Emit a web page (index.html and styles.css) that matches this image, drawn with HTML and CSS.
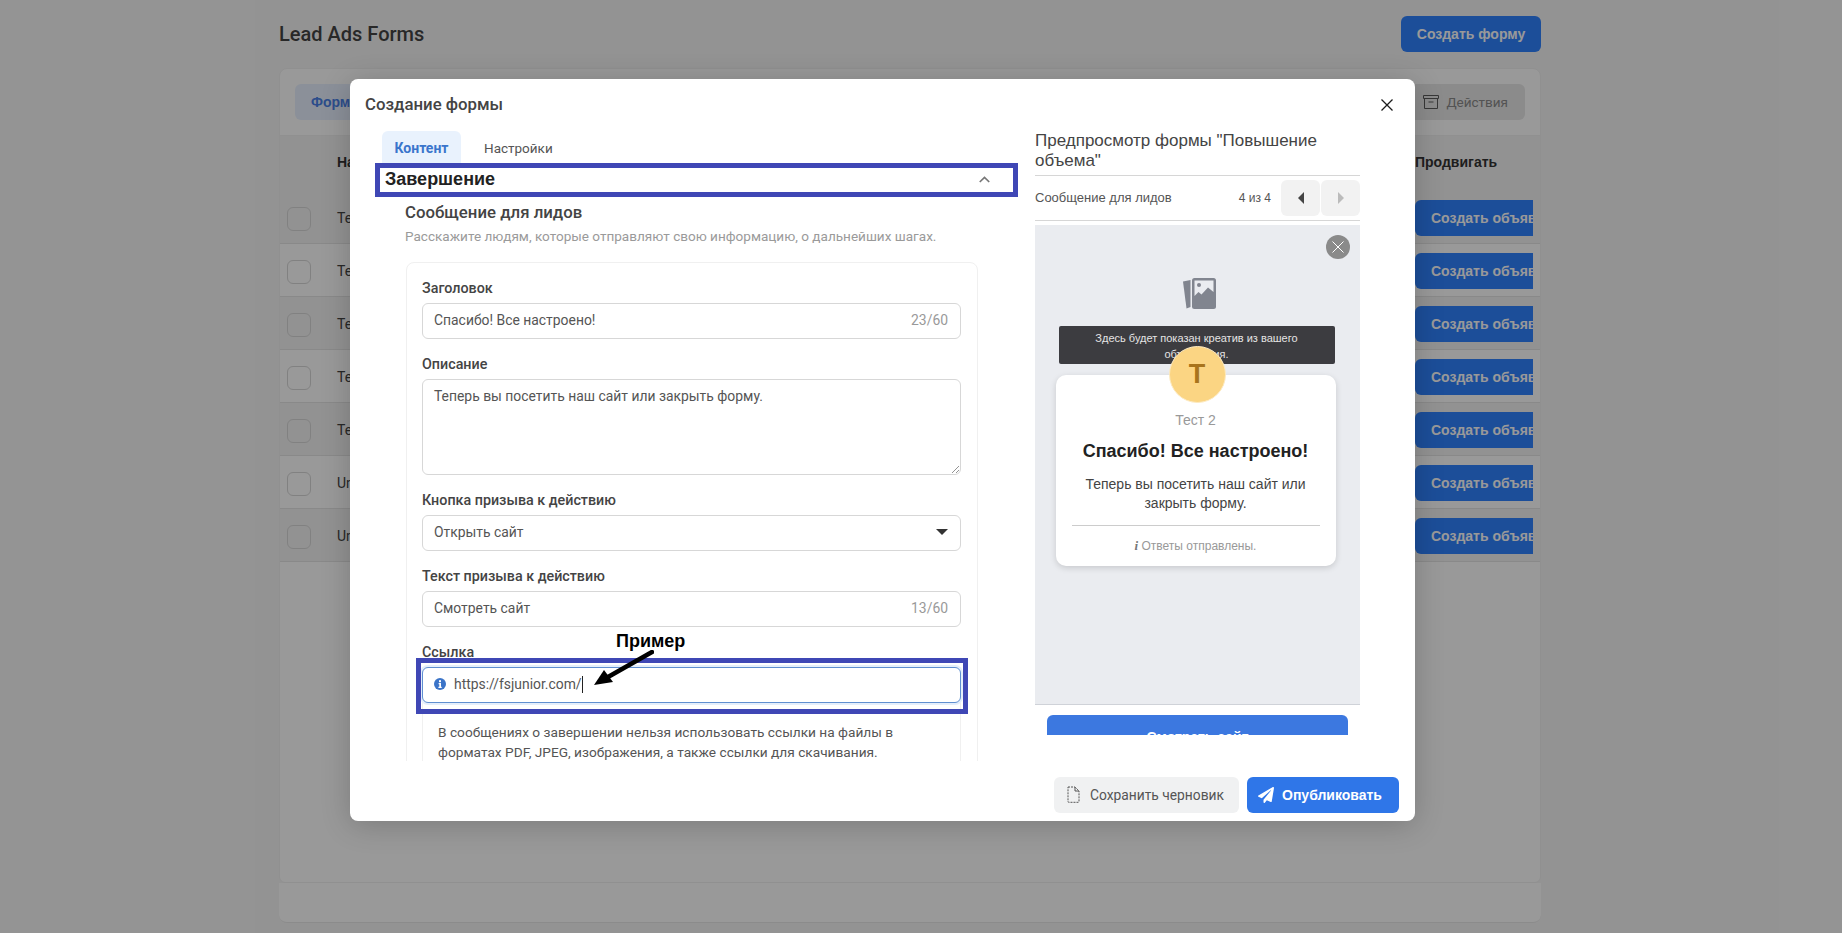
FILE: index.html
```html
<!DOCTYPE html>
<html lang="ru">
<head>
<meta charset="utf-8">
<title>Lead Ads Forms</title>
<link rel="stylesheet" href="styles.css">
</head>
<body>
<div class="page">
  <div class="page-head">
    <h1 class="page-title">Lead Ads Forms</h1>
    <button class="btn-primary">Создать форму</button>
  </div>
  <div class="panel">
    <div class="toolbar">
      <div class="tool-tab">Формы</div>
      <div class="tool-action">
        <svg class="archive-icon" viewBox="0 0 16 16" fill="none" stroke="#5c5c5c" stroke-width="1"><path d="M.5 1.500h15v3H.5zM1.500 4.500v10h13v-10M5.500 8h5"/></svg>
        Действия
      </div>
    </div>
    <div class="row row-head">
      <div class="cell-name">Название</div>
      <div class="cell-promote">Продвигать</div>
    </div>
    <div class="row row-dark"><span class="check"></span><div class="cell-name">Тест 2</div><div class="cell-promote"><span class="btn-create">Создать объявление</span></div></div>
    <div class="row"><span class="check"></span><div class="cell-name">Тест 1</div><div class="cell-promote"><span class="btn-create">Создать объявление</span></div></div>
    <div class="row row-dark"><span class="check"></span><div class="cell-name">Тест 3</div><div class="cell-promote"><span class="btn-create">Создать объявление</span></div></div>
    <div class="row"><span class="check"></span><div class="cell-name">Тест 4</div><div class="cell-promote"><span class="btn-create">Создать объявление</span></div></div>
    <div class="row row-dark"><span class="check"></span><div class="cell-name">Тест 5</div><div class="cell-promote"><span class="btn-create">Создать объявление</span></div></div>
    <div class="row"><span class="check"></span><div class="cell-name">Untitled</div><div class="cell-promote"><span class="btn-create">Создать объявление</span></div></div>
    <div class="row row-dark"><span class="check"></span><div class="cell-name">Untitled</div><div class="cell-promote"><span class="btn-create">Создать объявление</span></div></div>
  </div>
  <div class="panel-foot"></div>
</div>

<div class="backdrop"></div>

<div class="modal">
  <div class="modal-head">
    <span class="modal-title">Создание формы</span>
    <svg class="modal-close" viewBox="0 0 12 12" fill="none" stroke="#1c1c1c" stroke-width="1.300"><path d="M.5.5l11 11M11.500.5l-11 11"/></svg>
  </div>
  <div class="modal-body">
    <div class="editor">
      <div class="tabs">
        <div class="tab tab-active">Контент</div>
        <div class="tab">Настройки</div>
      </div>
      <div class="accordion-head">
        <span>Завершение</span>
        <svg class="chevron" viewBox="0 0 10 6" fill="none" stroke="#777" stroke-width="1.500"><path d="M.7 5.300L5 1l4.300 4.300"/></svg>
      </div>
      <div class="section">
        <div class="section-title">Сообщение для лидов</div>
        <div class="section-desc">Расскажите людям, которые отправляют свою информацию, о дальнейших шагах.</div>
        <div class="form-card">
          <div class="field">
            <label class="label">Заголовок</label>
            <div class="input"><span>Спасибо! Все настроено!</span><span class="count">23/60</span></div>
          </div>
          <div class="field">
            <label class="label">Описание</label>
            <div class="input textarea">Теперь вы посетить наш сайт или закрыть форму.
              <svg class="grip" viewBox="0 0 8 8" stroke="#777" stroke-width="0.800"><path d="M1 8l7-7M5 8l3-3"/></svg>
            </div>
          </div>
          <div class="field">
            <label class="label">Кнопка призыва к действию</label>
            <div class="input"><span>Открыть сайт</span><span class="caret"></span></div>
          </div>
          <div class="field">
            <label class="label">Текст призыва к действию</label>
            <div class="input"><span>Смотреть сайт</span><span class="count">13/60</span></div>
          </div>
          <div class="field">
            <label class="label">Ссылка</label>
            <div class="input input-focus">
              <svg class="info-icon" viewBox="0 0 12 12"><circle cx="6" cy="6" r="6" fill="#3b74c8"/><rect x="5" y="2.200" width="2" height="2" fill="#fff"/><path d="M4.600 5h2.400v3.800h.7V10H4.400V8.800h.9V6.200h-.7z" fill="#fff"/></svg>
              <span>https://fsjunior.com/</span><span class="cursor"></span>
              <div class="note-frame"></div>
              <div class="note-text">Пример</div>
              <svg class="note-arrow" viewBox="0 0 60 36"><path d="M58 2L14 27" stroke="#000" stroke-width="4.500" stroke-linecap="round"/><path d="M0 35l10-15 9 12z" fill="#000"/></svg>
            </div>
            <div class="warning">В сообщениях о завершении нельзя использовать ссылки на файлы в форматах PDF, JPEG, изображения, а также ссылки для скачивания.</div>
          </div>
        </div>
      </div>
    </div>
    <div class="preview">
      <div class="preview-title">Предпросмотр формы "Повышение объема"</div>
      <div class="preview-bar">
        <span class="step-name">Сообщение для лидов</span>
        <span class="step-count">4 из 4</span>
        <span class="step-btn"><i class="tri-left"></i></span>
        <span class="step-btn"><i class="tri-right"></i></span>
      </div>
      <div class="phone">
        <span class="phone-close"><svg viewBox="0 0 12 12" fill="none" stroke="#fff" stroke-width="1"><path d="M.5.5l11 11M11.500.5l-11 11"/></svg></span>
        <svg class="creative-icon" viewBox="0 0 33 31">
          <path d="M0 3.500L7.500 2v27l-4 1.500z" fill="#81858f"/>
          <rect x="9" y="0" width="24" height="31" rx="2.500" fill="#81858f"/>
          <path d="M11.500 2.500h19v11.500l-5.500-4.500-6.500 7-3-2.500-4 4z" fill="#eaecf0"/>
          <circle cx="16" cy="7" r="2" fill="#81858f"/>
        </svg>
        <div class="creative-note">Здесь будет показан креатив из вашего объявления.</div>
        <div class="thanks-card">
          <div class="avatar">T</div>
          <div class="thanks-org">Тест 2</div>
          <div class="thanks-title">Спасибо! Все настроено!</div>
          <div class="thanks-text">Теперь вы посетить наш сайт или закрыть форму.</div>
          <div class="thanks-foot"><i>i</i> Ответы отправлены.</div>
        </div>
      </div>
      <div class="phone-action"><span class="phone-btn">Смотреть сайт</span></div>
    </div>
  </div>
  <div class="modal-foot">
    <button class="btn-draft">
      <svg class="doc-icon" viewBox="0 0 13 17" fill="none" stroke="#555" stroke-width="1" stroke-dasharray="2 1"><path d="M1 1h7l4 4v10.500a.8.8 0 0 1-.8.8H1.800a.8.8 0 0 1-.8-.8z"/><path d="M8 1v4h4" stroke-dasharray="none"/></svg>
      Сохранить черновик
    </button>
    <button class="btn-publish">
      <svg class="plane-icon" viewBox="0 0 512 512"><path fill="#fff" d="M476 3.200L12.500 270.600c-18.100 10.400-15.800 35.600 2.200 43.200L121 358.400l287.300-253.200c5.500-4.900 13.300 2.600 8.600 8.300L176 407v80.500c0 23.600 28.500 32.900 42.500 15.800L282 426l124.600 52.200c14.200 6 30.400-2.900 33-18.200l72-432C515 7.800 493.300-6.800 476 3.200z"/></svg>
      Опубликовать
    </button>
  </div>
</div>
</body>
</html>
```
FILE: styles.css
```css
/* reset */
* {
  margin: 0;
  padding: 0;
  box-sizing: border-box;
}
html, body {
  height: 933px;
  overflow: hidden;
}
body {
  position: relative;
  background: #f6f6f6;
  font-family: Roboto, "Liberation Sans", sans-serif;
  color: #444;
  font-size: 14px;
}
button {
  border: 0;
  font-family: inherit;
}

/* page behind the dialog */
.page {
  width: 1262px;
  margin-left: 279px;
  padding-top: 16px;
}
.page-head {
  display: flex;
  justify-content: space-between;
  align-items: center;
  margin-bottom: 16px;
}
.page-title {
  font-size: 20px;
  font-weight: 500;
  color: #444;
}
.btn-primary {
  width: 140px;
  height: 36px;
  border-radius: 6px;
  background: #2f82ff;
  color: #fff;
  font: bold 14px "Liberation Sans", sans-serif;
}
.panel {
  height: 815px;
  background: #fff;
  border-radius: 8px 8px 6px 6px;
  overflow: hidden;
  border: 1px solid #f0f0f0;
}
.panel-foot {
  height: 40px;
  background: #fff;
  border-radius: 0 0 8px 8px;
  border-bottom: 1px solid #e8e8e8;
}
.toolbar {
  height: 67px;
  padding: 15px 15px 0 15px;
  display: flex;
  justify-content: space-between;
  align-items: flex-start;
  border-bottom: 1px solid #f0f0f0;
}
.tool-tab {
  height: 36px;
  padding: 0 16px;
  background: #e8f1ff;
  color: #4a80e8;
  font: bold 14px/36px "Liberation Sans", sans-serif;
  border-radius: 6px;
}
.tool-action {
  height: 36px;
  padding: 0 17px 0 16px;
  display: flex;
  align-items: center;
  gap: 7px;
  background: #e8e8e8;
  color: #8a8a8a;
  font-size: 13.500px;
  border-radius: 6px;
}
.archive-icon {
  width: 16px;
  height: 16px;
}
.row {
  position: relative;
  height: 53px;
  padding: 2px 0 0 57px;
  display: flex;
  align-items: center;
  border-bottom: 1px solid #e4e4e4;
}
.row-head {
  height: 55px;
  padding: 0 0 3px 57px;
  background: #f4f4f4;
  border-bottom: 0;
  font: bold 14px "Liberation Sans", sans-serif;
  color: #333;
}
.row-dark {
  background: #f3f3f3;
}
.check {
  position: absolute;
  left: 7px;
  top: 16px;
  width: 24px;
  height: 24px;
  border: 1px solid #d8d8d8;
  border-radius: 6px;
}
.cell-name {
  flex: 1;
}
.cell-promote {
  width: 118px;
  margin-right: 7px;
  overflow: hidden;
  white-space: nowrap;
}
.row-head .cell-promote {
  overflow: visible;
}
.btn-create {
  display: inline-block;
  height: 36px;
  padding: 0 16px;
  border-radius: 6px 0 0 6px;
  background: #2f82ff;
  color: #fff;
  font: bold 14px/36px "Liberation Sans", sans-serif;
  vertical-align: middle;
}
.backdrop {
  position: absolute;
  top: 0;
  right: 0;
  bottom: 0;
  left: 0;
  background: rgba(0, 0, 0, 0.4);
}

/* dialog */
.modal {
  position: absolute;
  left: 350px;
  top: 79px;
  width: 1065px;
  height: 742px;
  background: #fff;
  border-radius: 8px;
  box-shadow: 0 4px 30px rgba(0, 0, 0, 0.2);
}
.modal-head {
  height: 52px;
  padding: 0 22px 2px 15px;
  display: flex;
  justify-content: space-between;
  align-items: center;
}
.modal-title {
  font-size: 16.800px;
  font-weight: 500;
  color: #444;
}
.modal-close {
  width: 12px;
  height: 12px;
  margin-top: 2px;
}
.modal-body {
  height: 630px;
  padding-left: 25px;
  display: flex;
  gap: 17px;
}
.editor {
  width: 643px;
  overflow: hidden;
}
.tabs {
  height: 32px;
  padding-left: 7px;
  display: flex;
  font-size: 13.500px;
}
.tab {
  line-height: 34px;
  color: #555;
}
.tab-active {
  width: 79px;
  margin-right: 23px;
  text-align: center;
  background: #e9f2fd;
  border-radius: 6px 6px 0 0;
  color: #3a75cc;
  font-size: 14px;
  font-weight: 700;
}
.accordion-head {
  height: 34px;
  padding: 0 23px 2px 5px;
  border: 5px solid #3f47b5;
  display: flex;
  justify-content: space-between;
  align-items: center;
  font: bold 18px "Liberation Sans", sans-serif;
  color: #222;
}
.chevron {
  width: 11px;
  height: 7px;
}
.section {
  padding: 5px 40px 0 31px;
}
.section-title {
  margin-left: -1px;
  font-size: 16.800px;
  font-weight: 500;
  line-height: 20px;
  color: #444;
}
.section-desc {
  margin: 4px 0 0 -1px;
  font-size: 13.550px;
  line-height: 20px;
  color: #9a9a9a;
}
.form-card {
  margin-top: 16px;
  padding: 16px 16px 0 15px;
  border: 1px solid #f0f0f0;
  border-radius: 8px;
}
.field {
  margin-bottom: 16px;
}
.label {
  display: block;
  height: 18px;
  margin-bottom: 6px;
  line-height: 18px;
  font-size: 14.300px;
  font-weight: 500;
  color: #444;
}
.input {
  position: relative;
  height: 36px;
  padding: 0 11px 2px;
  display: flex;
  justify-content: space-between;
  align-items: center;
  border: 1px solid #d7d7d7;
  border-radius: 6px;
  background: #fff;
  color: #555;
  font-size: 13.900px;
}
.count {
  margin-right: 1px;
  color: #999;
}
.textarea {
  display: block;
  height: 96px;
  padding-top: 7px;
  line-height: 18px;
}
.grip {
  position: absolute;
  right: 1px;
  bottom: 1px;
  width: 8px;
  height: 8px;
}
.caret {
  width: 0;
  height: 0;
  border: 6px solid transparent;
  border-top: 6px solid #333;
  border-bottom: 0;
  margin-right: 1px;
}
.input-focus {
  justify-content: flex-start;
  border-color: #5f8fd0;
  box-shadow: 0 0 0 2px #e4eefb;
}
.info-icon {
  width: 12px;
  height: 12px;
  margin: 0 8px 0 0;
}
.cursor {
  width: 1px;
  height: 17px;
  background: #222;
}
.note-frame {
  position: absolute;
  left: -7px;
  right: -8px;
  top: -10px;
  bottom: -12px;
  border: 5px solid #3f47b5;
}
.note-text {
  position: absolute;
  left: 193px;
  top: -37px;
  font: bold 18px "Liberation Sans", sans-serif;
  color: #000;
}
.note-arrow {
  position: absolute;
  left: 171px;
  top: -18px;
  width: 60px;
  height: 36px;
}
.warning {
  padding: 19px 15px 0;
  height: 80px;
  line-height: 20px;
  font-size: 13.700px;
  color: #555;
  border: 1px solid #f0f0f0;
  border-top: 0;
}

/* preview column */
.preview {
  width: 325px;
  height: 604px;
  overflow: hidden;
}
.preview-title {
  padding-bottom: 4px;
  border-bottom: 1px solid #d6d6d6;
  font: 17px/20px "Liberation Sans", sans-serif;
  color: #444;
}
.preview-bar {
  height: 45px;
  padding-bottom: 1px;
  display: flex;
  align-items: center;
  border-bottom: 1px solid #d6d6d6;
  font: 13px "Liberation Sans", sans-serif;
  color: #555;
}
.step-name {
  flex: 1;
}
.step-count {
  margin-right: 9px;
  font-size: 12px;
}
.step-btn {
  width: 39px;
  height: 36px;
  margin-left: 1px;
  display: flex;
  justify-content: center;
  align-items: center;
  background: #f2f2f2;
  border-radius: 6px;
}
.tri-left {
  border: 6px solid transparent;
  border-left: 0;
  border-right: 6px solid #444;
}
.tri-right {
  border: 6px solid transparent;
  border-right: 0;
  border-left: 6px solid #bbb;
}
.phone {
  position: relative;
  height: 480px;
  margin-top: 4px;
  padding: 53px 2px 0 0;
  display: flex;
  flex-direction: column;
  align-items: center;
  background: #eaecf0;
  border-bottom: 1px solid #cfd2d8;
}
.phone-close {
  position: absolute;
  right: 10px;
  top: 10px;
  width: 24px;
  height: 24px;
  padding: 6px;
  border-radius: 50%;
  background: #8a8a8a;
}
.phone-close svg {
  display: block;
}
.creative-icon {
  width: 33px;
  height: 31px;
  margin-left: 6px;
}
.creative-note {
  width: 276px;
  height: 38px;
  margin-top: 17px;
  padding: 4px 20px 0;
  text-align: center;
  background: #3c3c40;
  border-radius: 2px;
  color: #e4e4e4;
  font: 11px/16px "Liberation Sans", sans-serif;
}
.thanks-card {
  position: relative;
  width: 280px;
  height: 191px;
  margin: 11px 2px 0 0;
  padding: 36px 16px 0;
  text-align: center;
  background: #fff;
  border-radius: 10px;
  box-shadow: 0 2px 6px rgba(0, 0, 0, 0.15);
  font-family: "Liberation Sans", sans-serif;
}
.avatar {
  position: absolute;
  left: 113px;
  top: -29px;
  width: 57px;
  height: 57px;
  border: 1px solid #fdeac0;
  border-radius: 50%;
  background: #fbd583;
  color: #a8741c;
  font: bold 27px/55px "Liberation Sans", sans-serif;
}
.thanks-org {
  line-height: 18px;
  color: #999;
}
.thanks-title {
  margin-top: 12px;
  font-size: 18px;
  font-weight: 700;
  line-height: 21px;
  color: #222;
}
.thanks-text {
  margin-top: 13px;
  padding: 0 8px;
  line-height: 19px;
  color: #444;
}
.thanks-foot {
  margin-top: 12px;
  padding-top: 12px;
  border-top: 1px solid #ccc;
  font-size: 12px;
  color: #999;
}
.thanks-foot i {
  font: italic bold 13px "Liberation Serif", serif;
  color: #777;
}
.phone-action {
  padding: 10px 12px 0;
}
.phone-btn {
  display: block;
  height: 40px;
  border-radius: 6px 6px 0 0;
  background: #3c78e0;
  color: #fff;
  text-align: center;
  font: bold 14px/44px "Liberation Sans", sans-serif;
}
.modal-foot {
  margin-top: 16px;
  padding-right: 16px;
  display: flex;
  justify-content: flex-end;
  gap: 8px;
}
.btn-draft, .btn-publish {
  height: 36px;
  padding-bottom: 1px;
  display: flex;
  align-items: center;
  border-radius: 6px;
}
.btn-draft {
  width: 185px;
  padding-left: 13px;
  gap: 10px;
  background: #f0f1f2;
  color: #555;
  font-size: 13.800px;
}
.btn-publish {
  width: 152px;
  padding-left: 11px;
  gap: 8px;
  background: #2f76e8;
  color: #fff;
  font: bold 14px "Liberation Sans", sans-serif;
}
.doc-icon {
  width: 13px;
  height: 17px;
}
.plane-icon {
  width: 16px;
  height: 16px;
}
```
